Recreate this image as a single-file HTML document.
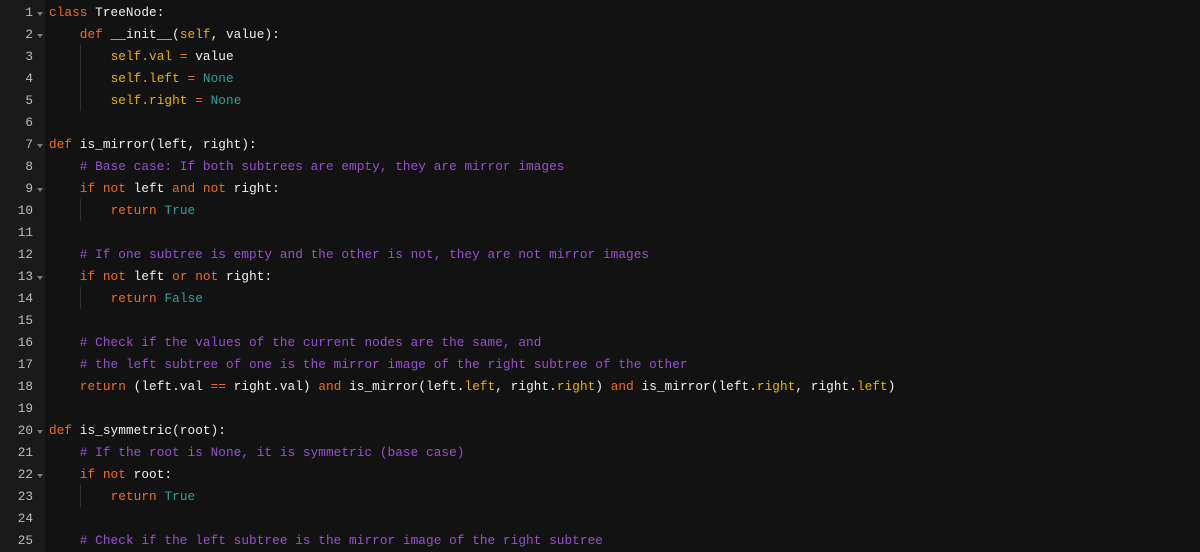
<!DOCTYPE html>
<html><head><meta charset="utf-8"><style>
html,body{margin:0;padding:0;width:1200px;height:552px;overflow:hidden;background:#121212;}
.g{position:absolute;left:0;top:0;width:45px;height:552px;background:#1a1a1a;}
.ln{position:absolute;left:0;width:33px;text-align:right;color:#bcbcbc;}
.ar{position:absolute;left:37px;width:0;height:0;border-left:3px solid transparent;border-right:3px solid transparent;border-top:4px solid #777;}
.l{position:absolute;left:49px;white-space:pre;color:#f0f0f0;letter-spacing:0.08px;}
body,.ln,.l{font-family:"Liberation Mono",monospace;font-size:12.7px;line-height:22px;}
.k{color:#f26b1d}.s{color:#e6b400}.n{color:#2aa198}.c{color:#9b4dd6}
.guide{position:absolute;width:1px;background:#2e2e2e;}
</style></head><body>
<div class="g"></div>
<div class="guide" style="left:80px;top:45px;height:66px"></div>
<div class="guide" style="left:80px;top:199px;height:22px"></div>
<div class="guide" style="left:80px;top:287px;height:22px"></div>
<div class="guide" style="left:80px;top:485px;height:22px"></div>
<div id="c"></div>
<script>
var L=[
['<span class="k">class</span> TreeNode:',1],
['    <span class="k">def</span> __init__(<span class="s">self</span>, value):',1],
['        <span class="s">self.val</span> <span class="k">=</span> value'],
['        <span class="s">self.left</span> <span class="k">=</span> <span class="n">None</span>'],
['        <span class="s">self.right</span> <span class="k">=</span> <span class="n">None</span>'],
[''],
['<span class="k">def</span> is_mirror(left, right):',1],
['    <span class="c"># Base case: If both subtrees are empty, they are mirror images</span>'],
['    <span class="k">if not</span> left <span class="k">and not</span> right:',1],
['        <span class="k">return</span> <span class="n">True</span>'],
[''],
['    <span class="c"># If one subtree is empty and the other is not, they are not mirror images</span>'],
['    <span class="k">if not</span> left <span class="k">or not</span> right:',1],
['        <span class="k">return</span> <span class="n">False</span>'],
[''],
['    <span class="c"># Check if the values of the current nodes are the same, and</span>'],
['    <span class="c"># the left subtree of one is the mirror image of the right subtree of the other</span>'],
['    <span class="k">return</span> (left.val <span class="k">==</span> right.val) <span class="k">and</span> is_mirror(left.<span class="s">left</span>, right.<span class="s">right</span>) <span class="k">and</span> is_mirror(left.<span class="s">right</span>, right.<span class="s">left</span>)'],
[''],
['<span class="k">def</span> is_symmetric(root):',1],
['    <span class="c"># If the root is None, it is symmetric (base case)</span>'],
['    <span class="k">if not</span> root:',1],
['        <span class="k">return</span> <span class="n">True</span>'],
[''],
['    <span class="c"># Check if the left subtree is the mirror image of the right subtree</span>']
];
var h='';
for(var i=0;i<L.length;i++){var t=2+i*22;
h+='<div class="ln" style="top:'+t+'px">'+(i+1)+'</div>';
if(L[i][1])h+='<div class="ar" style="top:'+(t+10)+'px"></div>';
h+='<div class="l" style="top:'+t+'px">'+L[i][0]+'</div>';}
document.getElementById('c').innerHTML=h;
</script>
</body></html>
